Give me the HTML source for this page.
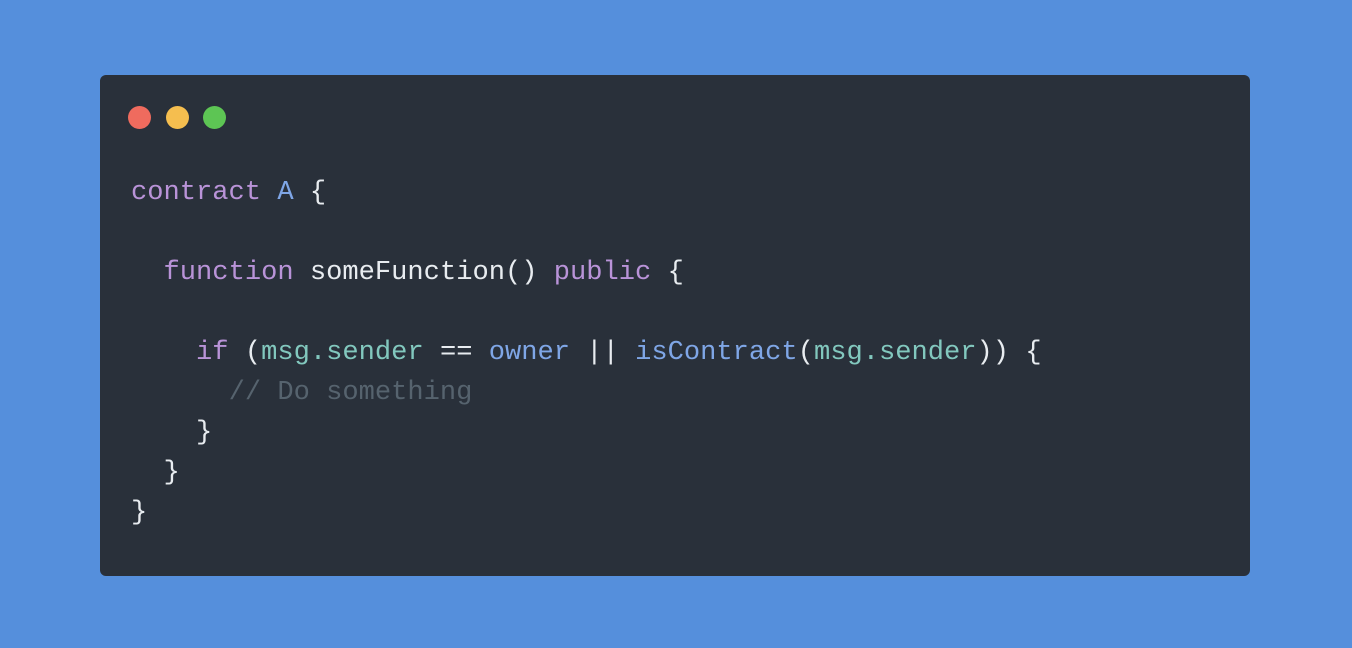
<!DOCTYPE html>
<html><head><style>
html,body{margin:0;padding:0;width:1352px;height:648px;background:#558fdc;overflow:hidden}
.win{position:absolute;left:100px;top:75px;width:1150px;height:501px;background:#29303a;border-radius:6px}
.dot{position:absolute;top:31px;width:23px;height:23px;border-radius:50%}
pre{position:absolute;left:31px;top:98px;margin:0;font-family:"Liberation Mono",monospace;font-size:27.1px;line-height:40px;color:#e8ecf0}
.k{color:#b993d8}.b{color:#7fa6e6}.t{color:#82c8be}.c{color:#56636e}
</style></head><body>
<div class="win">
<div class="dot" style="left:28px;background:#ef6b5e"></div>
<div class="dot" style="left:66px;background:#f5be4f"></div>
<div class="dot" style="left:103px;background:#5dc554"></div>
<pre><span class="k">contract</span> <span class="b">A</span> {

  <span class="k">function</span> someFunction() <span class="k">public</span> {

    <span class="k">if</span> (<span class="t">msg.sender</span> == <span class="b">owner</span> || <span class="b">isContract</span>(<span class="t">msg.sender</span>)) {
      <span class="c">// Do something</span>
    }
  }
}</pre>
</div>
</body></html>
